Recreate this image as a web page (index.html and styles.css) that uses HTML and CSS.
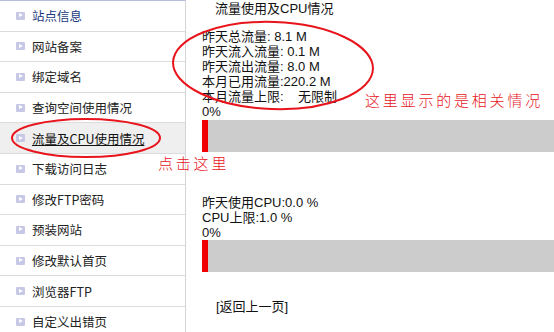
FILE: index.html
```html
<!DOCTYPE html>
<html lang="zh-CN">
<head>
<meta charset="utf-8">
<title>流量及CPU使用情况</title>
<link rel="stylesheet" href="styles.css">
</head>
<body>
<div class="page">
  <ul class="sidebar">
    <li class="item first"><span class="ico"></span><a>站点信息</a></li>
    <li class="item"><span class="ico"></span><a>网站备案</a></li>
    <li class="item"><span class="ico"></span><a>绑定域名</a></li>
    <li class="item"><span class="ico"></span><a>查询空间使用情况</a></li>
    <li class="item active"><span class="ico"></span><a>流量及CPU使用情况</a></li>
    <li class="item"><span class="ico"></span><a>下载访问日志</a></li>
    <li class="item"><span class="ico"></span><a>修改FTP密码</a></li>
    <li class="item"><span class="ico"></span><a>预装网站</a></li>
    <li class="item"><span class="ico"></span><a>修改默认首页</a></li>
    <li class="item"><span class="ico"></span><a>浏览器FTP</a></li>
    <li class="item"><span class="ico"></span><a>自定义出错页</a></li>
  </ul>
  <main class="main">
    <h1 class="title">流量使用及CPU情况</h1>
    <div class="stats">
      <div>昨天总流量: 8.1 M</div>
      <div>昨天流入流量: 0.1 M</div>
      <div>昨天流出流量: 8.0 M</div>
      <div>本月已用流量:220.2 M</div>
      <div>本月流量上限:&nbsp;&nbsp;&nbsp; 无限制</div>
      <div>0%</div>
    </div>
    <div class="bar"><div class="fill" style="width:6px"></div></div>
    <div class="stats cpu">
      <div>昨天使用CPU:0.0 %</div>
      <div>CPU上限:1.0 %</div>
      <div>0%</div>
    </div>
    <div class="bar"><div class="fill" style="width:6px"></div></div>
    <div class="back">[返回上一页]</div>
  </main>
  <svg class="marks" width="554" height="332" viewBox="0 0 554 332">
    <ellipse cx="273" cy="65.5" rx="100" ry="43.5" fill="none" stroke="#e8141c" stroke-width="2" transform="rotate(2 273 65.5)"/>
    <ellipse cx="86" cy="138" rx="74" ry="19" fill="none" stroke="#e8141c" stroke-width="2"/>
  </svg>
  <div class="note note-right">这里显示的是相关情况</div>
  <div class="note note-left">点击这里</div>
</div>
</body>
</html>
```
FILE: styles.css
```css
html, body {
  margin: 0;
  padding: 0;
  background: #fff;
}
.page {
  position: relative;
  width: 554px;
  height: 332px;
  overflow: hidden;
  display: flex;
  font-family: "Noto Sans CJK SC", "Noto Sans", sans-serif;
}
.sidebar {
  list-style: none;
  margin: 0;
  padding: 0;
  width: 185px;
  flex: none;
  border-top: 1px solid #b9bde0;
  border-right: 1px solid #d4d4d4;
}
.item {
  height: 29.6px;
  border-bottom: 1px solid #dcdcdc;
  display: flex;
  align-items: center;
  padding-left: 16px;
  font-size: 12.5px;
  color: #222;
}
.item a {
  line-height: 15px;
}
.item.first a {
  color: #1d3a7c;
}
.item.active {
  background: #efefef;
}
.item.active a {
  text-decoration: underline;
  color: #111;
}
.ico {
  position: relative;
  width: 9px;
  height: 8px;
  margin-right: 7px;
  background: #c7c7e6;
  border-radius: 1px;
  flex: none;
}
.ico::after {
  content: "";
  position: absolute;
  left: 3px;
  top: 1.5px;
  border-left: 4px solid #fff;
  border-top: 2.5px solid transparent;
  border-bottom: 2.5px solid transparent;
}
.main {
  flex: 1;
  padding-left: 16px;
  font-size: 13px;
  color: #111;
  font-family: "Liberation Sans", "Noto Sans CJK SC", sans-serif;
}
.title {
  margin: 0;
  padding-left: 13px;
  padding-top: 1px;
  font-size: 13px;
  font-weight: normal;
  line-height: 15px;
}
.stats {
  margin-top: 13px;
  line-height: 15.1px;
}
.stats.cpu {
  margin-top: 43px;
}
.bar {
  height: 32px;
  background: #cccccc;
  margin-top: 0;
}
.fill {
  height: 100%;
  background: #f00000;
}
.back {
  margin-top: 27px;
  padding-left: 14px;
  line-height: 15px;
}
.marks {
  position: absolute;
  left: 0;
  top: 0;
  pointer-events: none;
}
.note {
  position: absolute;
  color: #e8141c;
  font-size: 15px;
  line-height: 18px;
  letter-spacing: 2.8px;
  font-weight: 300;
}
.note-right {
  left: 365px;
  top: 91px;
}
.note-left {
  left: 158px;
  top: 154px;
}
```
